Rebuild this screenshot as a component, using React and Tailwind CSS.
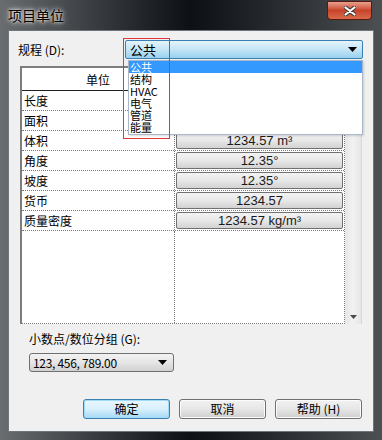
import React from "react";

const cjk = { fontFamily: '"Noto Sans CJK SC", "Noto Sans", sans-serif' };

const rows = [
  { label: "长度", value: "1235 mm" },
  { label: "面积", value: "1234.57 m²" },
  { label: "体积", value: "1234.57 m³" },
  { label: "角度", value: "12.35°" },
  { label: "坡度", value: "12.35°" },
  { label: "货币", value: "1234.57" },
  { label: "质量密度", value: "1234.57 kg/m³" },
];

const options = ["公共", "结构", "HVAC", "电气", "管道", "能量"];

const Arrow = ({ className = "" }) => (
  <svg width="9" height="5" viewBox="0 0 9 5" className={className}>
    <path d="M0 0 H9 L4.5 5 Z" fill="#000" />
  </svg>
);

const DialogButton = ({ children, primary }) => (
  <button
    className={
      "w-[87px] h-[20px] rounded-[3px] border text-[12px] leading-none text-black " +
      (primary
        ? "border-[#3c7fb1] bg-gradient-to-b from-[#eaf6fd] via-[#d9f0fc] to-[#a7d9f5] shadow-[inset_0_0_0_1px_#9edcf9]"
        : "border-[#707070] bg-gradient-to-b from-[#f2f2f2] via-[#e6e6e6] to-[#cfcfcf] shadow-[inset_0_0_0_1px_#fcfcfc]")
    }
    style={cjk}
  >
    {children}
  </button>
);

export default function App() {
  return (
    <div className="w-[382px] h-[440px] bg-gradient-to-r from-[#6a6d70] via-[#0d1115] to-[#4d5053] overflow-hidden">
      {/* title bar */}
      <div className="h-[30px] flex items-start">
        <div
          className="pl-[8px] pt-[6px] text-[14px] leading-[18px] text-black [text-shadow:0_0_6px_#ffffff,0_0_3px_#ffffff]"
          style={cjk}
        >
          项目单位
        </div>
        <div className="ml-auto mr-[10px] mt-[1px] w-[45px] h-[19px] rounded-b-[4px] border border-[#5b1a10] bg-gradient-to-b from-[#e8a08e] via-[#c8432a] to-[#d86a4a] flex items-center justify-center">
          <svg width="12" height="10" viewBox="0 0 12 10">
            <path
              d="M1 1 L11 9 M11 1 L1 9"
              stroke="#3a3a3a"
              strokeWidth="4"
              strokeLinecap="round"
            />
            <path
              d="M1.5 1.5 L10.5 8.5 M10.5 1.5 L1.5 8.5"
              stroke="#ffffff"
              strokeWidth="2.2"
              strokeLinecap="round"
            />
          </svg>
        </div>
      </div>

      {/* client area */}
      <div className="relative mx-[8px] h-[402px] bg-[#f0f0f0] border border-[#6e757b] pt-[9px]">
        {/* discipline row */}
        <div className="flex h-[19px] items-center">
          <div className="w-[116px] pl-[9px] text-[12px] text-black" style={cjk}>
            规程 (D):
          </div>
          <div className="w-[238px] h-[19px] rounded-[2px] border border-[#3c7fb1] bg-gradient-to-b from-[#e5f4fc] via-[#c4e5f6] to-[#98d1ef] flex items-center pl-[4px] pr-[5px]">
            <span className="text-[13px] text-black" style={cjk}>
              公共
            </span>
            <Arrow className="ml-auto" />
          </div>
        </div>

        {/* units table */}
        <div className="mt-[7px] ml-[11px] w-[342px] h-[258px] bg-white border-l-2 border-t-2 border-[#7d7d7d] flex">
          <div className="w-[323px] flex flex-col border-r border-b border-dotted border-[#7a7a7a]">
            <div className="h-[23px] flex border-b border-[#202020]">
              <div className="w-[152px] text-center text-[12px] leading-[23px] text-black" style={cjk}>
                单位
              </div>
            </div>
            {rows.map((r) => (
              <div key={r.label} className="h-[20px] flex border-b border-dotted border-[#7a7a7a]">
                <div
                  className="w-[153px] pl-[2px] border-r border-dotted border-[#7a7a7a] text-[12px] leading-[19px] text-black"
                  style={cjk}
                >
                  {r.label}
                </div>
                <div className="flex-1 px-[1px] py-[1px]">
                  <div className="h-full rounded-[2px] border border-[#707070] bg-gradient-to-b from-[#f3f3f3] via-[#e8e8e8] to-[#d2d2d2] text-center text-[13px] leading-[16px] text-[#1a1a1a] [font-family:'Liberation_Sans',sans-serif]">
                    {r.value}
                  </div>
                </div>
              </div>
            ))}
            <div className="flex-1 flex">
              <div className="w-[153px] border-r border-dotted border-[#7a7a7a]" />
            </div>
          </div>
          {/* scrollbar */}
          <div className="flex-1 bg-gradient-to-r from-[#e6e6e6] via-[#f2f2f2] to-[#e6e6e6] border-r border-[#d8d8d8] flex flex-col justify-end items-center pb-[5px]">
            <svg width="7" height="4" viewBox="0 0 7 4">
              <path d="M0 0 H7 L3.5 4 Z" fill="#4a4a4a" />
            </svg>
          </div>
        </div>

        {/* decimal grouping */}
        <div className="mt-[7px] ml-[20px] h-[16px] text-[12px] leading-[16px] text-black" style={cjk}>
          小数点/数位分组 (G):
        </div>
        <div className="mt-[6px] ml-[20px] w-[145px] h-[19px] rounded-[3px] border border-[#707070] bg-gradient-to-b from-[#f2f2f2] via-[#e6e6e6] to-[#d0d0d0] flex items-center pl-[3px] pr-[6px]">
          <span className="text-[12px] text-black tracking-[-0.3px]" style={cjk}>
            123, 456, 789.00
          </span>
          <Arrow className="ml-auto" />
        </div>

        {/* buttons */}
        <div className="mt-[27px] pr-[11px] flex justify-end gap-[9px]">
          <DialogButton primary>确定</DialogButton>
          <DialogButton>取消</DialogButton>
          <DialogButton>帮助 (H)</DialogButton>
        </div>

        {/* open dropdown list */}
        <div className="absolute left-[119px] top-[29px] w-[235px] h-[75px] bg-white border border-[#a9b7c9] shadow-[1px_1px_2px_rgba(0,0,0,0.15)]">
          {options.map((o, i) => (
            <div
              key={o}
              className={
                "h-[12px] pl-[1px] text-[11px] leading-[12px] " +
                (i === 0 ? "bg-[#3399ff] text-white" : "text-black")
              }
              style={cjk}
            >
              {o}
            </div>
          ))}
        </div>

        {/* red highlight box */}
        <div className="absolute left-[114px] top-[7px] w-[47px] h-[101px] border border-[#e0383a]" />
      </div>
    </div>
  );
}
